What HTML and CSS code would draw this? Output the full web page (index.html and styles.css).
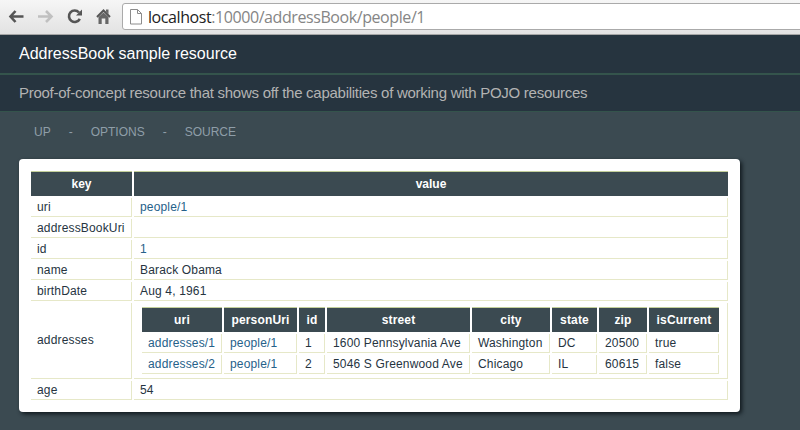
FILE: index.html
```html
<!DOCTYPE html>
<html lang="en">
<head>
<meta charset="utf-8">
<title>AddressBook sample resource</title>
<link rel="stylesheet" href="styles.css">
</head>
<body>
<div class="toolbar">
  <svg class="tools" width="112" height="34" viewBox="0 0 112 34" fill="none">
    <path d="M10.5 16.5H23.5M15.500 11L10.500 16.500L15.500 22" stroke="#555" stroke-width="2.6"/>
    <path d="M38 16.5H51M46 11L51.500 16.500L46 22" stroke="#c0c0c0" stroke-width="2.6"/>
    <path d="M79 12.500A5.700 5.700 0 1 0 79.800 18.800" stroke="#555" stroke-width="2.600"/>
    <path d="M82 9.500V15.500H76Z" fill="#555"/>
    <path d="M97 17L103.500 10.500L110 17" stroke="#555" stroke-width="2"/>
    <path d="M106 9.500H108.500V14L106 11.500ZM98.500 17L103.500 12.500L108.500 17V24H105.300V18.500H101.700V24H98.500Z" fill="#666"/>
  </svg>
  <div class="address">
    <svg class="page-icon" width="12" height="16" viewBox="0 0 12 16" fill="#fff" stroke="#8c8c8c">
      <path d="M.5.5H7.500L11.500 4.500V15H.5ZM7.500.5V4.500H11.500"/>
    </svg>
    <span class="url"><span class="host">localhost</span>:10000/addressBook/people/1</span>
  </div>
</div>
<h1>AddressBook sample resource</h1>
<h2>Proof-of-concept resource that shows off the capabilities of working with POJO resources</h2>
<nav><a>UP</a><span>-</span><a>OPTIONS</a><span>-</span><a>SOURCE</a></nav>
<main class="card">
  <table class="outer">
    <colgroup><col class="c-key"><col class="c-value"></colgroup>
    <tr><th>key</th><th>value</th></tr>
    <tr><td>uri</td><td><a>people/1</a></td></tr>
    <tr><td>addressBookUri</td><td></td></tr>
    <tr><td>id</td><td><a>1</a></td></tr>
    <tr><td>name</td><td>Barack Obama</td></tr>
    <tr><td>birthDate</td><td>Aug 4, 1961</td></tr>
    <tr><td class="nested-key">addresses</td><td class="nested">
      <table class="inner">
        <colgroup><col class="c-uri"><col class="c-person"><col class="c-id"><col class="c-street"><col class="c-city"><col class="c-state"><col class="c-zip"><col class="c-current"></colgroup>
        <tr><th>uri</th><th>personUri</th><th>id</th><th>street</th><th>city</th><th>state</th><th>zip</th><th>isCurrent</th></tr>
        <tr><td><a>addresses/1</a></td><td><a>people/1</a></td><td>1</td><td>1600 Pennsylvania Ave</td><td>Washington</td><td>DC</td><td>20500</td><td>true</td></tr>
        <tr><td><a>addresses/2</a></td><td><a>people/1</a></td><td>2</td><td>5046 S Greenwood Ave</td><td>Chicago</td><td>IL</td><td>60615</td><td>false</td></tr>
      </table>
    </td></tr>
    <tr><td>age</td><td>54</td></tr>
  </table>
</main>
</body>
</html>
```
FILE: styles.css
```css
* { box-sizing: border-box; }
html { overflow: hidden; }
body {
  margin: 0;
  height: 430px;
  background: #3b4a51;
  font-family: "Liberation Sans", Arial, sans-serif;
  font-size: 12px;
  color: #26343f;
}
.toolbar {
  display: flex;
  height: 35px;
  overflow: hidden;
  background: linear-gradient(#f6f6f6, #e2e2e2);
  border-bottom: 1px solid #a5a5a5;
}
.tools { flex: none; margin-right: 10px; }
.address {
  flex: 1;
  display: flex;
  align-items: center;
  height: 27px;
  margin: 3px -4px 0 0;
  padding-left: 7px;
  background: #fff;
  border: 1px solid #aaa;
  border-radius: 3px;
}
.page-icon { margin-right: 6px; }
.url { font: 16px/24px "Open Sans", sans-serif; letter-spacing: -0.42px; color: #858585; white-space: nowrap; }
.host { color: #222; }
h1, h2 {
  margin: 0;
  padding-left: 19px;
  background: #26343f;
  font-weight: normal;
  white-space: nowrap;
}
h1 { height: 40px; border-bottom: 2px solid #34544c; font-size: 16px; line-height: 37px; color: #fff; }
h2 { height: 37px; border-bottom: 1px solid #34544c; font-size: 15px; line-height: 36px; letter-spacing: -0.265px; color: #b3b3b3; }
nav { display: flex; height: 47px; padding-left: 34px; line-height: 40px; color: #8f9ea8; }
nav span { margin: 0 18px; }
.card {
  width: 721px;
  height: 253px;
  margin-left: 19px;
  padding: 10px;
  background: #fff;
  border-radius: 4px;
  box-shadow: 2px 2px 4px #10181d;
}
table { table-layout: fixed; border-collapse: separate; border-spacing: 2px; }
.outer { width: 701px; }
.inner { width: 581px; }
th, td { padding: 0 6px; text-align: left; white-space: nowrap; }
th { height: 25px; border-top: 1px solid #c3cf9b; background: #3b4a51; color: #fff; text-align: center; line-height: 24px; }
td { height: 19px; border-right: 1px solid #e6e8c8; border-bottom: 1px solid #e6e8c8; line-height: 18px; letter-spacing: 0.16px; }
td a { color: #26618a; }
td.nested { padding: 2px 6px; }
td.nested-key { padding-bottom: 2px; }
.c-key { width: 101px; }
.c-value { width: 594px; }
.c-uri { width: 80px; }
.c-person { width: 73px; }
.c-id { width: 26px; }
.c-street { width: 143px; }
.c-city { width: 78px; }
.c-state { width: 45px; }
.c-zip { width: 48px; }
.c-current { width: 70px; }
```
